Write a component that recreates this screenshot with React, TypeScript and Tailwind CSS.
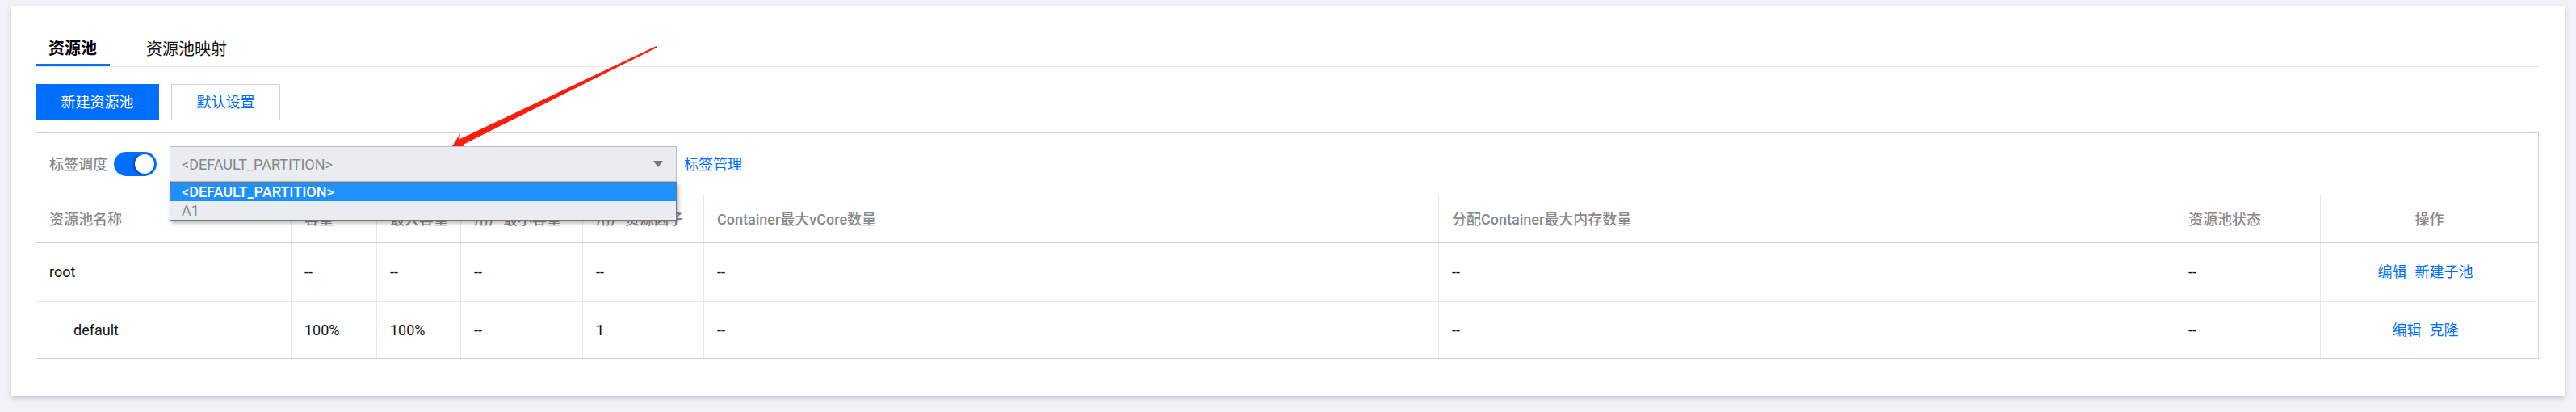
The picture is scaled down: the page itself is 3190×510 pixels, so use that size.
import React from "react";

type Row = {
    name: string;
    indent?: boolean;
    cells: string[];
    actions: string[];
};

const rows: Row[] = [
    { name: "root", cells: ["--", "--", "--", "--", "--", "--", "--"], actions: ["编辑", "新建子池"] },
    { name: "default", indent: true, cells: ["100%", "100%", "--", "1", "--", "--", "--"], actions: ["编辑", "克隆"] },
];

const headers = ["容量", "最大容量", "用户最小容量", "用户资源因子", "Container最大vCore数量", "分配Container最大内存数量", "资源池状态"];

const gridCols = "grid grid-cols-[315px_106px_104px_151px_150px_910px_1fr_180px_270px]";

const Arrow: React.FC = () => (
    // annotation arrow, clipped at the select's top edge
    <svg className="absolute left-[540px] top-[40px] z-10 pointer-events-none" width="300" height="141" viewBox="540 40 300 141">
        <polygon
            fill="#fb1d10"
            points="560,181 569.9,165 569.1,172.2 812.6,57.1 813.4,58.9 572.5,179.4 578.7,183.2"
        />
    </svg>
);

const App: React.FC = () => {
    return (
        <div className="min-h-screen bg-[#f2f3f7] pt-[7px] px-[14px] pb-[21px] font-[Roboto,'Noto_Sans_CJK_SC',sans-serif] text-[18px]">
            <Arrow />
            <div className="bg-white shadow-[0_3px_6px_rgba(0,0,0,0.18)] pt-[33px] pl-[30px] pr-[32px] pb-[46px]">
                {/* tabs */}
                <div className="flex border-b border-[#e5e7ec]">
                    <div className="h-[42px] px-4 flex items-center border-b-[3px] border-[#006eff] text-[20px] font-bold text-black">
                        资源池
                    </div>
                    <div className="h-[42px] px-4 ml-[29px] flex items-center text-[20px] text-[#111]">
                        资源池映射
                    </div>
                </div>

                {/* buttons */}
                <div className="flex mt-[21px]">
                    <button className="h-[45px] w-[153px] bg-[#006eff] text-white text-[18px]">新建资源池</button>
                    <button className="h-[45px] w-[135px] ml-[15px] border border-[#cfd5de] text-[#006eff] text-[18px]">默认设置</button>
                </div>

                {/* table */}
                <div className="mt-[15px] border border-[#cfd5de]">
                    <div className="h-[77px] border-b border-[#e5e7ec] flex items-center pl-4">
                        <span className="text-[#888] font-medium">标签调度</span>
                        <div className="ml-2 w-[53px] h-[30px] rounded-full bg-[#006eff] flex items-center justify-end pr-[3px]">
                            <div className="w-[24px] h-[24px] rounded-full bg-white shadow-[-2px_1px_3px_rgba(0,0,0,0.35)]" />
                        </div>
                        <div className="relative ml-4 w-[628px] z-20">
                            <div className="h-[44px] bg-[#e9ecf1] border border-[#b8bdc7] flex items-center justify-between pl-[14px] pr-[16px] text-[18px] text-[#888]">
                                <span>&lt;DEFAULT_PARTITION&gt;</span>
                                <span className="w-0 h-0 border-l-[6px] border-r-[6px] border-t-[8px] border-l-transparent border-r-transparent border-t-[#777]" />
                            </div>
                            <div className="absolute left-0 top-full w-full border border-[#767676] bg-[#e9ecf1] shadow-[2px_3px_5px_rgba(0,0,0,0.3)] text-[18px] leading-none">
                                <div className="h-[23px] bg-[#1e90ff] text-white font-medium flex items-center pl-[14px]">&lt;DEFAULT_PARTITION&gt;</div>
                                <div className="h-[23px] text-[#888] flex items-center pl-[14px]">A1</div>
                            </div>
                        </div>
                        <a className="ml-[9px] text-[#006eff]">标签管理</a>
                    </div>

                    <div className={`${gridCols} h-[59px] border-b border-[#cfd5de] text-[#888] font-medium whitespace-nowrap`}>
                        <div className="px-4 flex items-center">资源池名称</div>
                        {headers.map((h) => (
                            <div key={h} className="px-4 flex items-center border-l border-[#e5e7ec]">{h}</div>
                        ))}
                        <div className="px-4 flex items-center justify-center border-l border-[#e5e7ec]">操作</div>
                    </div>

                    {rows.map((r, i) => (
                        <div key={r.name} className={`${gridCols} ${i === 0 ? "h-[73px] border-b-2 border-[#e7eaef]" : "h-[69px]"} text-[#111] whitespace-nowrap`}>
                            <div className={`flex items-center ${r.indent ? "pl-[46px]" : "px-4"}`}>{r.name}</div>
                            {r.cells.map((c, j) => (
                                <div key={j} className="px-4 flex items-center border-l border-[#e5e7ec]">{c}</div>
                            ))}
                            <div className="flex items-center justify-center gap-[10px] pr-[10px] border-l border-[#e5e7ec] text-[#006eff]">
                                {r.actions.map((a) => (
                                    <a key={a}>{a}</a>
                                ))}
                            </div>
                        </div>
                    ))}
                </div>
            </div>
        </div>
    );
};

export default App;
